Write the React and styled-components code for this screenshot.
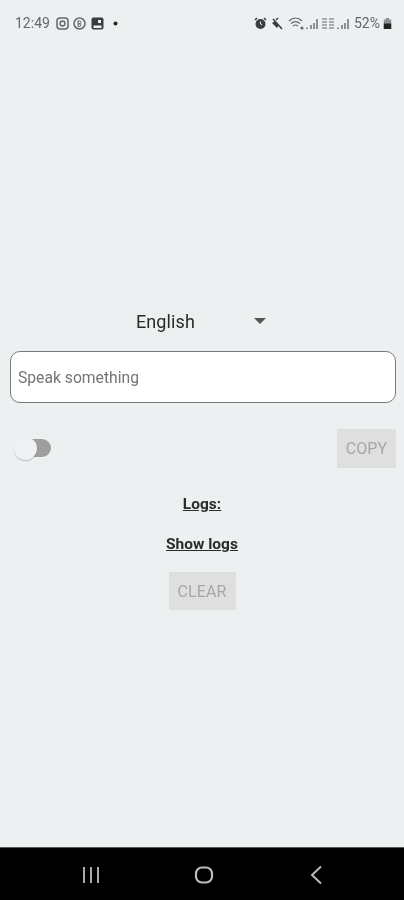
import React from 'react';
import styled, { createGlobalStyle } from 'styled-components';

const GlobalStyle = createGlobalStyle`
  html, body { margin: 0; padding: 0; background: #ecf0f1; }
  * { box-sizing: border-box; }
`;

const Screen = styled.div`
  width: 404px;
  height: 900px;
  display: flex;
  flex-direction: column;
  background: #ecf0f1;
  font-family: Roboto, "Liberation Sans", sans-serif;
  overflow: hidden;
`;

const StatusBar = styled.div`
  height: 46px;
  padding: 0 12px 0 15px;
  display: flex;
  align-items: center;
  justify-content: space-between;
  color: #63676a;
  filter: blur(0.6px);
`;

const StatusGroup = styled.div`
  display: flex;
  align-items: center;
`;

const Slot = styled.span`
  display: flex;
  margin-left: ${p => p.$left || 0}px;
`;

const StatusText = styled.span`
  font-size: 14px;
  line-height: 16px;
`;

const Main = styled.main`
  flex: 1;
  padding: 261px 10px 0;
  display: flex;
  flex-direction: column;
  align-items: center;
  filter: blur(0.45px);
`;

const LanguageSelect = styled.div`
  width: 130px;
  height: 28px;
  margin: 0 2px 16px 0;
  display: flex;
  align-items: center;
  justify-content: space-between;
  font-size: 18px;
  letter-spacing: 0.1px;
  color: #2a2a2a;
`;

const Caret = styled.span`
  width: 0;
  height: 0;
  border-left: 6px solid transparent;
  border-right: 6px solid transparent;
  border-top: 6px solid #555;
`;

const SpeechInput = styled.div`
  width: 386px;
  height: 52px;
  padding: 0 7px;
  align-self: flex-start;
  display: flex;
  align-items: center;
  background: #fff;
  border: 1px solid #777b7d;
  border-radius: 10px;
  font-size: 15.7px;
  color: #747474;
`;

const ControlRow = styled.div`
  width: 386px;
  margin: 26px 0 27px;
  align-self: flex-start;
  display: flex;
  align-items: center;
  justify-content: space-between;
`;

const Switch = styled.div`
  position: relative;
  width: 37px;
  height: 18px;
  margin: 0 0 1px 4px;
  display: flex;
  justify-content: flex-end;
`;

const SwitchTrack = styled.div`
  width: 26px;
  height: 18px;
  border-radius: 0 9px 9px 0;
  background: #9e9e9e;
`;

const SwitchThumb = styled.div`
  position: absolute;
  left: 0;
  top: -2px;
  width: 23px;
  height: 23px;
  border-radius: 50%;
  background: #eef1f2;
  box-shadow: 0 1px 1px rgba(0, 0, 0, 0.22);
`;

const FlatButton = styled.div`
  height: ${p => p.$height}px;
  width: ${p => p.$width}px;
  display: flex;
  align-items: center;
  justify-content: center;
  background: #dfdfdf;
  color: #a6a6a6;
  font-size: 16px;
  letter-spacing: 0.1px;
`;

const LogLabel = styled.div`
  height: 19px;
  margin-bottom: ${p => p.$after}px;
  font-size: 15.5px;
  line-height: 19px;
  font-weight: 700;
  color: #2b2b2b;
  text-decoration: underline;
`;

const NavBar = styled.nav`
  height: 53px;
  padding-top: 2px;
  display: flex;
  align-items: center;
  justify-content: center;
  background: #000;
  border-top: 1px solid #555;
  color: #bdbdbd;
`;

const NavSlot = styled.span`
  display: flex;
  margin-left: ${p => p.$left || 0}px;
`;

const Icon = ({ w = 13, h = 13, children, sw = 1.5 }) => (
  <svg width={w} height={h} viewBox={`0 0 ${w} ${h}`} fill="none" stroke="currentColor" strokeWidth={sw}>
    {children}
  </svg>
);

const Bars = () => (
  <Icon sw={1.4}>
    <path d="M2 12v-1.5M6 12V8M9 12V6M12 12V2" />
  </Icon>
);

export default function App() {
  return (
    <Screen>
      <GlobalStyle />
      <StatusBar>
        <StatusGroup>
          <StatusText>12:49</StatusText>
          <Slot $left={6}>
            <Icon>
              <rect x="1" y="1" width="11" height="11" rx="3" />
              <circle cx="6.5" cy="6.5" r="2.4" />
            </Icon>
          </Slot>
          <Slot $left={4}>
            <Icon>
              <circle cx="6.5" cy="6.5" r="5.5" />
              <path d="M5 3.5v6M5 4h1.6a1.4 1.4 0 0 1 0 2.8H5M5 6.8h1.8a1.4 1.4 0 0 1 0 2.7H5" strokeWidth="1" />
            </Icon>
          </Slot>
          <Slot $left={5}>
            <Icon>
              <rect x="0.5" y="0.5" width="12" height="12" rx="2" fill="#3a3d3f" stroke="none" />
              <path d="M2.5 8.5h8v2.5h-8z" fill="#ecf0f1" stroke="none" />
              <path d="M7 3h3v3H7z" fill="#ecf0f1" stroke="none" />
            </Icon>
          </Slot>
          <Slot $left={9}>
            <svg width="5" height="5" viewBox="0 0 5 5">
              <circle cx="2.5" cy="2.5" r="2" fill="#222" />
            </svg>
          </Slot>
        </StatusGroup>
        <StatusGroup>
          <Icon>
            <circle cx="6.5" cy="7" r="5" fill="#3a3d3f" stroke="none" />
            <path d="M1 3l2-2M12 3l-2-2" stroke="#3a3d3f" />
            <path d="M6.5 4.5V7l1.6 1" stroke="#ecf0f1" strokeWidth="1" />
          </Icon>
          <Slot $left={3}>
            <Icon>
              <path d="M2 6l3-2 4 4-2 3z" fill="#3a3d3f" stroke="none" />
              <path d="M8 1L6 3M12 12L3 2" stroke="#3a3d3f" />
            </Icon>
          </Slot>
          <Slot $left={5}>
            <Icon w={17} sw={1.2}>
              <path d="M1 4c4-4 9-4 13 0M3 6.5c3-2.5 6-2.5 9 0M5 9c1.5-1.2 3.5-1.2 5 0" />
              <circle cx="14" cy="11" r="1" fill="currentColor" />
            </Icon>
          </Slot>
          <Bars />
          <Slot $left={3}>
            <Icon w={14} sw={1.2}>
              <path d="M1 2h5M1 5h5M1 8h5M1 11h5M8 2h5M8 5h5M8 8h5M8 11h5" />
            </Icon>
          </Slot>
          <Slot $left={1}>
            <Bars />
          </Slot>
          <Slot $left={5}>
            <StatusText>52%</StatusText>
          </Slot>
          <Slot $left={3}>
            <svg width="9" height="13" viewBox="0 0 9 13">
              <path d="M3 1h3v1.5h2.2V12H.8V2.5H3z" fill="#8d9091" />
              <path d="M.8 6.5h7.4V12H.8z" fill="#222" />
            </svg>
          </Slot>
        </StatusGroup>
      </StatusBar>

      <Main>
        <LanguageSelect>
          English
          <Caret />
        </LanguageSelect>
        <SpeechInput>Speak something</SpeechInput>
        <ControlRow>
          <Switch>
            <SwitchTrack />
            <SwitchThumb />
          </Switch>
          <FlatButton $width={59} $height={39}>COPY</FlatButton>
        </ControlRow>
        <LogLabel $after={21}>Logs:</LogLabel>
        <LogLabel $after={18}>Show logs</LogLabel>
        <FlatButton $width={67} $height={38}>CLEAR</FlatButton>
      </Main>

      <NavBar>
        <NavSlot>
          <svg width="18" height="18" viewBox="0 0 18 18" fill="none" stroke="currentColor" strokeWidth="1.8">
            <path d="M2 1v16M9 1v16M16 1v16" />
          </svg>
        </NavSlot>
        <NavSlot $left={94}>
          <svg width="20" height="18" viewBox="0 0 20 18" fill="none" stroke="currentColor" strokeWidth="2.2">
            <rect x="2" y="1.5" width="16" height="15" rx="6" />
          </svg>
        </NavSlot>
        <NavSlot $left={95}>
          <svg width="14" height="20" viewBox="0 0 14 20" fill="none" stroke="currentColor" strokeWidth="1.9">
            <path d="M12 1.5L3 10l9 8.5" />
          </svg>
        </NavSlot>
      </NavBar>
    </Screen>
  );
}
